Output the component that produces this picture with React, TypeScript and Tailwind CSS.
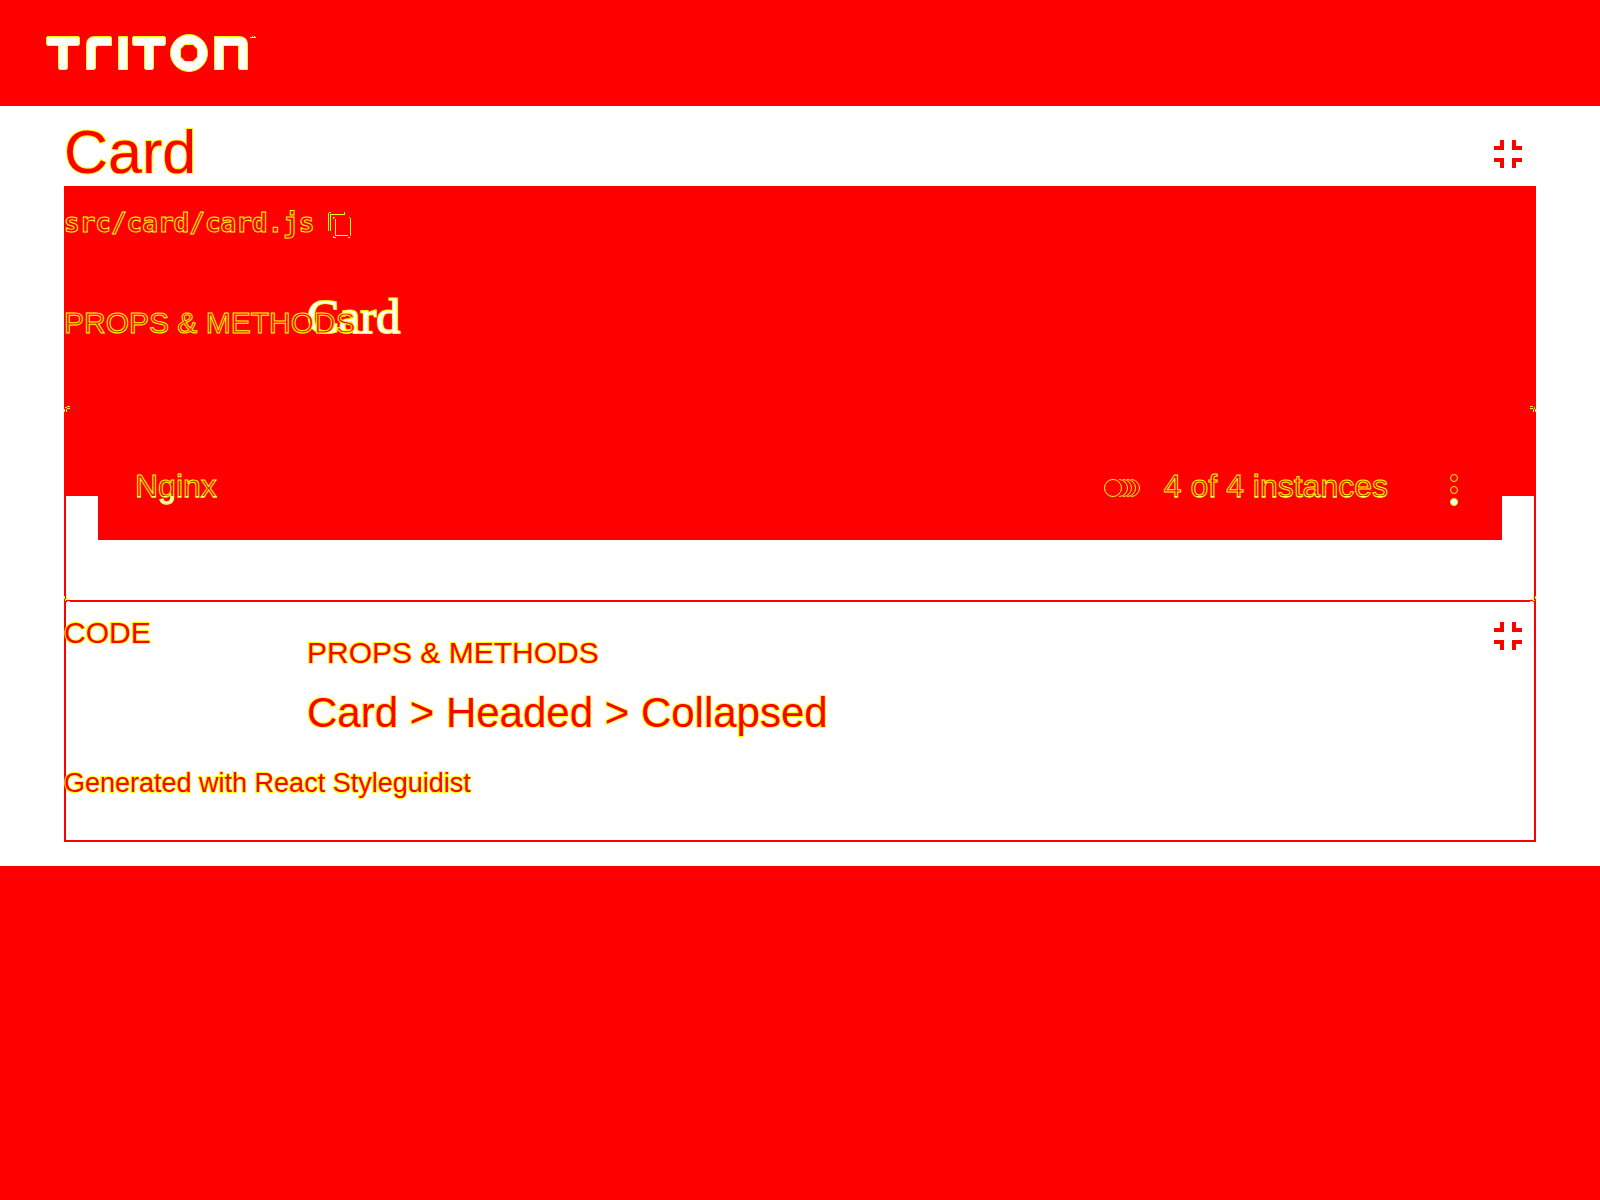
const outlined = "text-[#ff0000] [-webkit-text-stroke:1px_#ffff00]";
const haloed = "text-[#ff0000] [-webkit-text-stroke:2px_#ffff00] [paint-order:stroke_fill]";
const split =
  "text-transparent bg-clip-text bg-[linear-gradient(#ff0000_30px,#ffffff_30px)] [-webkit-text-stroke:1px_#ffff00]";

function Logo() {
  return (
    <svg width="212" height="40" viewBox="-1 -1 212 40" role="img" aria-label="Triton">
      <g fill="#fff" stroke="#ff0" strokeWidth="1">
        <path d="M1.500 2.500H32.500L33.500 3.500V10L32.500 11.500H21.500V34L20.500 35.500H13.500L12.500 34V11.500H1.500L.5 10V3.500Z" />
        <path d="M40.500 35.500V11Q40.500 2.500 49 2.500H64.500L65.500 3.500V11.500H52Q49.500 11.500 49.500 14V34L48.500 35.500Z" />
        <path d="M72.500 2.500H81.500V35.500H72.500Z" />
        <path d="M87.500 2.500H118.500L119.500 3.500V10L118.500 11.500H107.500V34L106.500 35.500H99.500L98.500 34V11.500H87.500L86.500 10V3.500Z" />
        <path
          fillRule="evenodd"
          d="M143 .5A18.500 18.500 0 0 1 143 37.500A18.500 18.500 0 0 1 143 .5ZM139 10.500L134.500 15V23L139 27.500H147L151.500 23V15L147 10.500Z"
        />
        <path d="M168.500 35.500V2.500H193Q201.500 2.500 201.500 11V35.500H193.500L192.500 34V11.500H177.500V35.500Z" />
      </g>
      <path d="M204 3h6v1h-6zM206 2h1v1h-1zM208 2h1v1h-1z" fill="#ff0" />
    </svg>
  );
}

function CollapseButton({ label, className }: { label: string; className: string }) {
  return (
    <button type="button" aria-label={label} className={className}>
      <svg width="28" height="28" viewBox="0 0 28 28" fill="#f00" className="block">
        <path d="M6 0H10V10H0V6H6ZM18 0H22V6H28V10H18ZM0 18H10V28H6V22H0ZM18 18H28V22H22V28H18Z" />
      </svg>
    </button>
  );
}

function Corner({ className }: { className: string }) {
  return (
    <svg width="6" height="6" viewBox="0 0 6 6" shapeRendering="crispEdges" className={className}>
      <path d="M3 0h3v1h-3zM1 1h2v1h-2zM0 3h1v3h-1zM3 2h3v1h-3zM2 3h1v3h-1z" fill="#ff0" />
    </svg>
  );
}

export default function App() {
  return (
    <div className="flex min-h-screen flex-col bg-[#ff0000] font-['Liberation_Sans',sans-serif]">
      <header className="flex h-[106px] items-center px-[45px]">
        <Logo />
      </header>
      <main className="bg-white px-16 pt-4 pb-6">
        <div className="mb-1 flex items-center justify-between">
          <h1 className={`text-[61px] leading-[60px] ${haloed}`}>Card</h1>
          <CollapseButton label="Collapse card" className="mt-1 mr-[14px]" />
        </div>
        <section className="inset-ring-2 inset-ring-[#ff0000]">
          <div className="h-[220px] bg-[#ff0000] pt-[21px]">
            <div className="flex items-center gap-[14px]">
              <p className={`font-['DejaVu_Sans_Mono',monospace] text-[26px] leading-8 font-bold ${outlined}`}>src/card/card.js</p>
              <button type="button" aria-label="Copy path" className="mt-1">
                <svg width="24" height="26" viewBox="0 0 24 26" fill="#ff0" shapeRendering="crispEdges" className="block">
                  <path d="M0 1h1v18h-1zM1 0h2v1h-2zM2 2h1v17h-1zM2 2h15v1h-15zM16 0h1v2h-1zM7 7h1v17h-1zM5 5h2v1h-2zM5 6h1v1h-1zM7 23h13v1h-13zM5 24h1v1h-1zM5 25h3v1h-3zM22 6h1v18h-1zM21 5h1v1h-1zM20 25h2v1h-2z" />
                </svg>
              </button>
            </div>
            <div className="mt-[54px] grid items-baseline">
              <h2 className="col-start-1 row-start-1 pl-[243px] font-['Liberation_Serif',serif] text-[48px] leading-[48px] text-white [-webkit-text-stroke:2px_#ffff00] [paint-order:stroke_fill]">
                Card
              </h2>
              <h3 className={`col-start-1 row-start-1 text-[30px] leading-10 ${outlined}`}>PROPS &amp; METHODS</h3>
            </div>
          </div>
          <div className="relative border-b-2 border-[#ff0000] bg-[linear-gradient(#ff0000_90px,transparent_90px)] px-[34px] pt-[26px] pb-[60px]">
            <Corner className="absolute top-0 left-0" />
            <Corner className="absolute top-0 right-0 rotate-90" />
            <Corner className="absolute -bottom-0.5 left-0 -rotate-90" />
            <Corner className="absolute right-0 -bottom-0.5 rotate-180" />
            <div className="flex h-[108px] items-center bg-[#ff0000] pr-11 pl-[37px]">
              <h4 className={`mr-auto text-[32px] leading-10 ${split}`}>Nginx</h4>
              <svg width="36" height="22" viewBox="0 0 36 22" fill="none" stroke="#ff0" className="mr-6 block">
                <circle cx="9" cy="13" r="8.500" />
                <path d="M15 4.500A8.500 8.500 0 0 1 15 21.500M19 4.500A8.500 8.500 0 0 1 19 21.500M23 4.500A8.500 8.500 0 0 1 23 21.500M27 4.500A8.500 8.500 0 0 1 27 21.500" />
              </svg>
              <p className={`mr-[62px] text-[32px] leading-10 ${split}`}>4 of 4 instances</p>
              <button type="button" aria-label="More actions">
                <svg width="8" height="40" viewBox="0 -8 8 40" fill="#f00" stroke="#ff0" className="block">
                  <circle cx="4" cy="4" r="3.500" />
                  <circle cx="4" cy="16" r="3.500" />
                  <circle cx="4" cy="28" r="3.500" fill="#fff" />
                </svg>
              </button>
            </div>
          </div>
          <div className="pt-[11px] pb-[43px]">
            <div className="flex items-start">
              <h3 className={`w-[243px] text-[30px] leading-10 ${haloed}`}>CODE</h3>
              <div className="mt-5 flex-1">
                <h3 className={`text-[30px] leading-10 ${haloed}`}>PROPS &amp; METHODS</h3>
                <h2 className={`mt-4 text-[42px] leading-[48px] ${haloed}`}>Card &gt; Headed &gt; Collapsed</h2>
              </div>
              <CollapseButton label="Collapse code" className="mt-[9px] mr-[14px]" />
            </div>
            <p className={`mt-[30px] text-[27px] leading-8 ${haloed}`}>Generated with React Styleguidist</p>
          </div>
        </section>
      </main>
    </div>
  );
}
